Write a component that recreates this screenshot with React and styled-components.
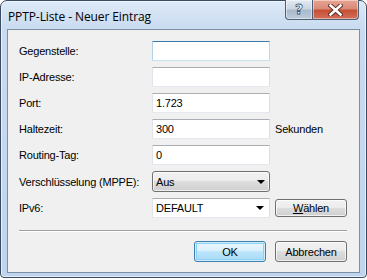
import React from "react";
import styled, { createGlobalStyle, css } from "styled-components";

const GlobalStyle = createGlobalStyle`
  html, body {
    margin: 0;
    padding: 0;
    background: #ffffff;
  }
`

const Window = styled.div`
  box-sizing: border-box;
  width: 367px;
  height: 278px;
  display: flex;
  flex-direction: column;
  padding: 0 6px 4px 6px;
  border: 1px solid #3a4b63;
  border-radius: 7px 7px 4px 4px;
  background: linear-gradient(to bottom, #dde9f7 0px, #c9dbf0 28px, #bfd4ee 100%);
  box-shadow: inset 0 0 0 1px rgba(255, 255, 255, 0.6);
`

const TitleBar = styled.div`
  height: 28px;
  display: flex;
  justify-content: space-between;
  align-items: flex-start;
`

const Title = styled.span`
  margin: 7px 0 0 1px;
  font-family: "Open Sans", "Noto Sans", sans-serif;
  font-size: 12px;
  letter-spacing: -0.1px;
  color: #000000;
`

const CaptionButtons = styled.div`
  display: flex;
  margin-right: 1px;
  margin-top: -1px;
`

const CaptionButton = styled.div`
  box-sizing: border-box;
  height: 20px;
  width: ${props => props.$width}px;
  display: flex;
  align-items: center;
  justify-content: center;
  border: 1px solid #4f5f74;
  border-top: none;
  background: ${props => props.$close
    ? "linear-gradient(to bottom, #e8a493 0%, #d98b78 45%, #c74f35 55%, #d1705c 100%)"
    : "linear-gradient(to bottom, #e3eaf2 0%, #cbd6e2 45%, #a9bacd 55%, #bdcad8 100%)"};
  box-shadow: inset 0 0 0 1px rgba(255, 255, 255, 0.45);
  ${props => props.$first && css`
    border-radius: 0 0 0 4px;
  `}
  ${props => props.$close && css`
    border-left: none;
    border-radius: 0 0 4px 0;
  `}
`

const HelpGlyph = styled.span`
  font-family: "DejaVu Sans", sans-serif;
  font-weight: bold;
  font-size: 14px;
  line-height: 1;
  color: #ffffff;
  -webkit-text-stroke: 0.8px #46566a;
  margin-top: -1px;
`

const Client = styled.div`
  flex: 1;
  border: 1px solid #7d8fa7;
  background: #f0f0f0;
  padding: 11px 11px 0 11px;
  font-family: "Liberation Sans", Arial, sans-serif;
  font-size: 11px;
  letter-spacing: -0.2px;
  color: #000000;
`

const Form = styled.div`
  display: grid;
  grid-template-columns: 128px 118px 72px;
  column-gap: 5px;
  row-gap: 6px;
  align-items: center;
`

const Label = styled.span`
  white-space: nowrap;
`

const TextBox = styled.div`
  box-sizing: border-box;
  height: 20px;
  display: flex;
  align-items: center;
  padding: 0 3px;
  background: #ffffff;
  border: 1px solid;
  border-color: #abadb3 #dbdfe6 #e3e9ef #e2e3ea;
  border-radius: 1px;
  ${props => props.$focused && css`
    border-color: #3d7bad #b7d9ed #c7e2f1 #b5cfe7;
  `}
`

const Arrow = styled.span`
  margin-left: auto;
  margin-right: 2px;
  width: 0;
  height: 0;
  border-left: 4px solid transparent;
  border-right: 4px solid transparent;
  border-top: 4px solid #000000;
`

const DropButton = styled.div`
  box-sizing: border-box;
  height: 21px;
  display: flex;
  align-items: center;
  padding: 0 2px 0 3px;
  border: 1px solid #707070;
  border-radius: 3px;
  background: linear-gradient(to bottom, #f2f2f2 0%, #ebebeb 50%, #dddddd 50%, #cfcfcf 100%);
  box-shadow: inset 0 0 0 1px rgba(255, 255, 255, 0.7);
`

const Separator = styled.div`
  margin-top: 12px;
  width: 328px;
  height: 1px;
  background: #a0a0a0;
  border-bottom: 1px solid #ffffff;
`

const ButtonRow = styled.div`
  display: flex;
  justify-content: flex-end;
  gap: 9px;
  width: 328px;
  margin-top: 9px;
`

const Button = styled.div`
  box-sizing: border-box;
  width: 72px;
  height: ${props => props.$height || 21}px;
  display: flex;
  align-items: center;
  justify-content: center;
  border: 1px solid #707070;
  border-radius: 3px;
  background: linear-gradient(to bottom, #f2f2f2 0%, #ebebeb 50%, #dddddd 50%, #cfcfcf 100%);
  box-shadow: inset 0 0 0 1px rgba(255, 255, 255, 0.7);
  ${props => props.$default && css`
    border-color: #3c7fb1;
    background: linear-gradient(to bottom, #eaf6fd 0%, #d9f0fc 50%, #bee6fd 50%, #a7d9f5 100%);
    box-shadow: inset 0 0 0 1px rgba(255, 255, 255, 0.6), inset 0 0 0 2px #8fd1f2;
  `}
`

const fields = [
  { label: "Gegenstelle:", value: "", focused: true },
  { label: "IP-Adresse:", value: "" },
  { label: "Port:", value: "1.723" },
  { label: "Haltezeit:", value: "300", unit: "Sekunden" },
  { label: "Routing-Tag:", value: "0" },
]

export default function App() {
  return (
    <>
      <GlobalStyle />
      <Window>
        <TitleBar>
          <Title>PPTP-Liste - Neuer Eintrag</Title>
          <CaptionButtons>
            <CaptionButton $width={28} $first>
              <HelpGlyph>?</HelpGlyph>
            </CaptionButton>
            <CaptionButton $width={46} $close>
              <svg width="15" height="12" viewBox="0 0 15 12">
                <path d="M2.5 1.5 L12.5 10.5 M12.5 1.5 L2.5 10.5" stroke="#5a2a22" strokeWidth="4.4" strokeLinecap="square" />
                <path d="M2.5 1.5 L12.5 10.5 M12.5 1.5 L2.5 10.5" stroke="#ffffff" strokeWidth="2.6" strokeLinecap="square" />
              </svg>
            </CaptionButton>
          </CaptionButtons>
        </TitleBar>
        <Client>
          <Form>
            {fields.map(f => (
              <React.Fragment key={f.label}>
                <Label>{f.label}</Label>
                <TextBox $focused={f.focused}>{f.value}</TextBox>
                <Label>{f.unit || ""}</Label>
              </React.Fragment>
            ))}
            <Label>Verschlüsselung (MPPE):</Label>
            <DropButton>
              Aus
              <Arrow />
            </DropButton>
            <span />
            <Label>IPv6:</Label>
            <TextBox>
              DEFAULT
              <Arrow />
            </TextBox>
            <Button $height={18}><span><u>W</u>ählen</span></Button>
          </Form>
          <Separator />
          <ButtonRow>
            <Button $default>OK</Button>
            <Button>Abbrechen</Button>
          </ButtonRow>
        </Client>
      </Window>
    </>
  );
}
